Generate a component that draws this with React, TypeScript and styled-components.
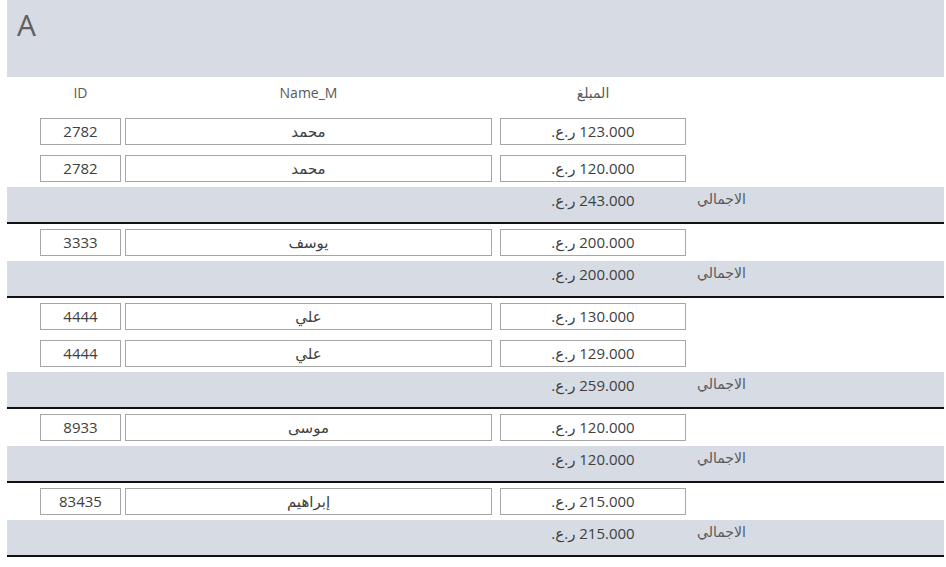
import React from 'react';
import styled, { createGlobalStyle } from 'styled-components';

interface Entry {
  id: string;
  name: string;
  amount: string;
}

interface Group {
  entries: Entry[];
  total: string;
}

const groups: Group[] = [
  {
    entries: [
      { id: '2782', name: 'محمد', amount: '123.000' },
      { id: '2782', name: 'محمد', amount: '120.000' },
    ],
    total: '243.000',
  },
  { entries: [{ id: '3333', name: 'يوسف', amount: '200.000' }], total: '200.000' },
  {
    entries: [
      { id: '4444', name: 'علي', amount: '130.000' },
      { id: '4444', name: 'علي', amount: '129.000' },
    ],
    total: '259.000',
  },
  { entries: [{ id: '8933', name: 'موسى', amount: '120.000' }], total: '120.000' },
  { entries: [{ id: '83435', name: 'إبراهيم', amount: '215.000' }], total: '215.000' },
];

const money = (v: string) => `${v} ر.ع.`;

function App() {
  return (
    <>
      <GlobalStyle />
      <Report>
        <ReportHeader>
          <Title>A</Title>
        </ReportHeader>
        <ColumnRow>
          <IdCell>ID</IdCell>
          <NameCell>Name_M</NameCell>
          <AmountCell dir="rtl">المبلغ</AmountCell>
        </ColumnRow>
        {groups.map((g, gi) => (
          <GroupBlock key={gi}>
            {g.entries.map((e, ei) => (
              <DetailRow key={ei}>
                <IdCell>
                  <Field>{e.id}</Field>
                </IdCell>
                <NameCell>
                  <Field dir="rtl">{e.name}</Field>
                </NameCell>
                <AmountCell>
                  <Field dir="rtl">{money(e.amount)}</Field>
                </AmountCell>
              </DetailRow>
            ))}
            <TotalRow>
              <IdCell />
              <NameCell />
              <AmountCell>
                <TotalValue dir="rtl">{money(g.total)}</TotalValue>
              </AmountCell>
              <TotalLabel dir="rtl">الاجمالي</TotalLabel>
            </TotalRow>
          </GroupBlock>
        ))}
      </Report>
    </>
  );
}

const GlobalStyle = createGlobalStyle`
  body {
    margin: 0;
    background: #ffffff;
    font-family: 'Open Sans', 'DejaVu Sans', sans-serif;
    color: #404040;
  }
`;

const Report = styled.div`
  margin-left: 7px;
  width: 937px;
  display: flex;
  flex-direction: column;
`;

const ReportHeader = styled.header`
  height: 77px;
  background-color: #d6dbe4;
  padding: 4px 0 0 10px;
  box-sizing: border-box;
`;

const Title = styled.div`
  font-size: 30px;
  font-weight: 400;
  color: #5f5f5f;
  line-height: 42px;
`;

const Row = styled.div`
  display: flex;
  align-items: center;
  padding-left: 33px;
`;

const ColumnRow = styled(Row)`
  height: 36px;
  font-size: 14px;
  color: #595959;
  padding-bottom: 6px;
  box-sizing: border-box;
  text-align: center;
`;

const DetailRow = styled(Row)`
  height: 37px;
  align-items: flex-start;
  padding-top: 5px;
  box-sizing: border-box;
`;

const GroupBlock = styled.section`
  display: flex;
  flex-direction: column;
`;

const TotalRow = styled(Row)`
  height: 37px;
  background-color: #d6dbe4;
  border-bottom: 2px solid #111111;
  box-sizing: border-box;
`;

const IdCell = styled.div`
  width: 81px;
  text-align: center;
`;

const NameCell = styled.div`
  width: 367px;
  margin-left: 4px;
  text-align: center;
`;

const AmountCell = styled.div`
  width: 186px;
  margin-left: 8px;
  text-align: center;
`;

const Field = styled.div`
  height: 27px;
  border: 1px solid #a6a6a6;
  box-sizing: border-box;
  font-size: 15px;
  line-height: 25px;
  color: #404040;
  text-align: center;
  background: #ffffff;
`;

const TotalValue = styled.div`
  font-size: 15px;
  line-height: 20px;
  margin-top: -10px;
`;

const TotalLabel = styled.div`
  margin-left: 11px;
  font-size: 14px;
  color: #595959;
  margin-top: -12px;
`;

export default App;
